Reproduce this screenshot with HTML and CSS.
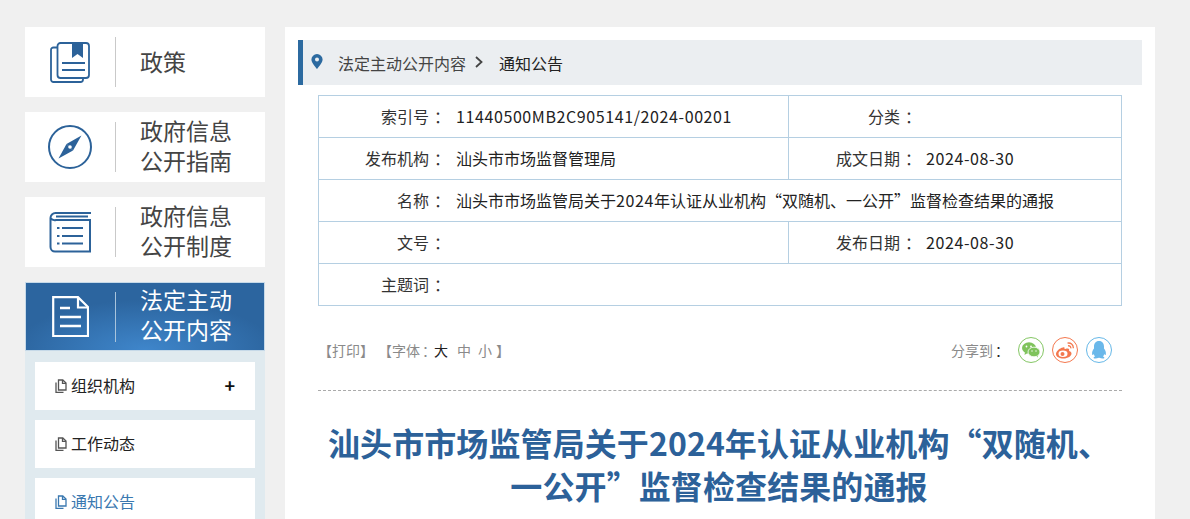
FILE: index.html
```html
<!DOCTYPE html>
<html lang="zh-CN">
<head>
<meta charset="utf-8">
<title>通知公告</title>
<link rel="stylesheet" href="styles.css">
</head>
<body>
<div class="page">
  <aside class="side">
    <a class="nav-card">
      <span class="nav-icon"><svg width="40" height="41" viewBox="0 0 40 41" fill="none" stroke="#2c6299" stroke-width="1.800"><path d="M7 5.500H3.500a2.500 2.500 0 0 0-2.500 2.500V37.500a2.500 2.500 0 0 0 2.500 2.500H30.500a2.500 2.500 0 0 0 2.500-2.500V36"/><rect x="7.500" y="1" width="31.500" height="35" rx="3"/><path d="M22 0h11v16l-5.500-4-5.500 4z" fill="#2c6299" stroke="none"/><path d="M12 21H35M12 28H35"/></svg></span>
      <span class="nav-text nav-single">政策</span>
    </a>
    <a class="nav-card">
      <span class="nav-icon"><svg width="46" height="46" viewBox="0 0 46 46" fill="none"><circle cx="23" cy="23" r="21" stroke="#2c6299" stroke-width="2"/><path d="M34.500 11.500 26 26.500 19.500 20z" fill="#2c6299"/><path d="M11.500 34.500 19.500 20 26 26.500z" fill="#2c6299"/><circle cx="23" cy="23" r="1.800" fill="#fff"/></svg></span>
      <span class="nav-text">政府信息<br>公开指南</span>
    </a>
    <a class="nav-card">
      <span class="nav-icon"><svg width="42" height="42" viewBox="0 0 42 42" fill="none" stroke="#2c6299" stroke-width="2"><path d="M42 2H6.500A5 5 0 0 0 1.500 7V36A4.500 4.500 0 0 0 6 40.500H41V9H7A5.500 5.500 0 0 1 1.500 7"/><path d="M7 5.500H39"/><path d="M13 17H34M13 25H34M13 32.500H34"/><path d="M8 17h2.500M8 25h2.500M8 32.500h2.500"/></svg></span>
      <span class="nav-text">政府信息<br>公开制度</span>
    </a>
    <a class="nav-card nav-active">
      <span class="nav-icon"><svg width="37" height="41" viewBox="0 0 37 41" fill="none" stroke="#fff" stroke-width="2.200"><path d="M1.200 1.200H26L36 11V40H1.200z"/><path d="M26 1.200V11.500H36"/><path d="M8 12H18M8 21H29M8 30H29" stroke-width="2.400"/></svg></span>
      <span class="nav-text">法定主动<br>公开内容</span>
    </a>
    <ul class="sub">
      <li class="sub-item"><svg class="doc" viewBox="0 0 12 14" fill="none" stroke="currentColor" stroke-width="1.300"><path d="M3.500 1h4.300L11 4v7H3.500z"/><path d="M7.500 1v3.300H11"/><path d="M1 3.500V13.300H8.500"/></svg><span class="sub-text">组织机构</span><b class="plus">+</b></li>
      <li class="sub-item"><svg class="doc" viewBox="0 0 12 14" fill="none" stroke="currentColor" stroke-width="1.300"><path d="M3.500 1h4.300L11 4v7H3.500z"/><path d="M7.500 1v3.300H11"/><path d="M1 3.500V13.300H8.500"/></svg><span class="sub-text">工作动态</span></li>
      <li class="sub-item sub-current"><svg class="doc" viewBox="0 0 12 14" fill="none" stroke="currentColor" stroke-width="1.300"><path d="M3.500 1h4.300L11 4v7H3.500z"/><path d="M7.500 1v3.300H11"/><path d="M1 3.500V13.300H8.500"/></svg><span class="sub-text">通知公告</span></li>
    </ul>
  </aside>
  <main class="main">
    <div class="crumb">
      <svg class="pin" width="12" height="15" viewBox="0 0 12 15"><path fill-rule="evenodd" d="M6 0a5.600 5.600 0 0 1 5.600 5.600C11.600 9 6 15 6 15S.4 9 .4 5.600A5.600 5.600 0 0 1 6 0zm0 3.600a2 2 0 1 0 0 4 2 2 0 0 0 0-4z" fill="#2c6aa0"/></svg>
      <span class="crumb-parent">法定主动公开内容</span>
      <svg class="chev" width="8" height="12" viewBox="0 0 8 12" fill="none" stroke="#444" stroke-width="1.800"><path d="M1 1l5.500 5L1 11"/></svg>
      <span class="crumb-now">通知公告</span>
    </div>
    <div class="meta">
      <div class="row">
        <div class="cell cell-l"><span class="k">索引号<span class="c">：</span></span><span class="v num">11440500MB2C905141/2024-00201</span></div>
        <div class="cell cell-r"><span class="k2">分类<span class="c">：</span></span></div>
      </div>
      <div class="row">
        <div class="cell cell-l"><span class="k">发布机构<span class="c">：</span></span><span class="v">汕头市市场监督管理局</span></div>
        <div class="cell cell-r"><span class="k2">成文日期<span class="c">：</span></span><span class="v num">2024-08-30</span></div>
      </div>
      <div class="row">
        <div class="cell"><span class="k">名称<span class="c">：</span></span><span class="v">汕头市市场监管局关于<span class="num">2024</span>年认证从业机构“双随机、一公开”监督检查结果的通报</span></div>
      </div>
      <div class="row">
        <div class="cell cell-l"><span class="k">文号<span class="c">：</span></span></div>
        <div class="cell cell-r"><span class="k2">发布日期<span class="c">：</span></span><span class="v num">2024-08-30</span></div>
      </div>
      <div class="row">
        <div class="cell"><span class="k">主题词<span class="c">：</span></span></div>
      </div>
    </div>
    <div class="tools">
      <div class="tools-left"><span class="print">【打印】</span><span>【字体<span class="c-small">：</span></span><span class="dark">大</span><span class="sz">中</span><span class="sz sz-small">小</span><span class="close">】</span></div>
      <div class="share">
        <span class="share-label">分享到<span class="dark c-small">：</span></span>
        <span class="share-btn wx"><svg width="18" height="16" viewBox="0 0 18 16"><ellipse cx="7" cy="6" rx="7" ry="5.800" fill="#7fc35c"/><path d="M3 10l-.5 3 3-2z" fill="#7fc35c"/><ellipse cx="12" cy="10" rx="6" ry="4.800" fill="#7fc35c" stroke="#fff" stroke-width=".8"/><path d="M15 14l1 1.800-.2-2.500z" fill="#7fc35c"/><circle cx="4.500" cy="4.500" r=".9" fill="#fff"/><circle cx="9" cy="4.500" r=".9" fill="#fff"/><circle cx="10" cy="9" r=".7" fill="#fff"/><circle cx="14" cy="9" r=".7" fill="#fff"/></svg></span>
        <span class="share-btn wb"><svg width="20" height="17" viewBox="0 0 20 17" fill="none"><path d="M8 5.500C4.500 6 1 9.500 1 12c0 2.800 3.500 4.500 7.500 4.500 4.500 0 8-2.500 8-5 0-1.500-1.500-2.200-2.500-2.500.5-1.500.3-3-2.200-2.500C10 7 9.500 7.200 9.500 7c.3-1.500-.2-2-1.500-1.500z" fill="#f4784e"/><ellipse cx="8" cy="11.800" rx="4.500" ry="3.300" fill="#fff"/><circle cx="7.500" cy="12" r="2" fill="#f4784e"/><path d="M12.500 1.200c3-.8 6 1.500 5.800 5M13 3.800c1.500-.3 3 .8 2.800 2.500" stroke="#f4784e" stroke-width="1.300"/></svg></span>
        <span class="share-btn qq"><svg width="16" height="18" viewBox="0 0 16 18"><path d="M8 0c3.400 0 5 2.600 5 5.500v2c1.300 1.500 2.300 3.800 1.800 6-.3 1-1 .6-1.600-.5-.2 1-.7 1.900-1.300 2.500 1.200.4 1.800 1 1.300 1.700-.5.600-3 .6-5-.4-.2.100-.3.100-.4 0-2 1-4.500 1-5 .4-.5-.7.100-1.300 1.300-1.700C3.500 14.900 3 14 2.800 13c-.6 1.100-1.300 1.500-1.600.5-.5-2.200.5-4.500 1.800-6v-2C3 2.600 4.600 0 8 0z" fill="#6ab8ea"/></svg></span>
      </div>
    </div>
    <h1 class="title">汕头市市场监管局关于2024年认证从业机构“双随机、一公开”监督检查结果的通报</h1>
  </main>
</div>
</body>
</html>
```
FILE: styles.css
```css
* { box-sizing: border-box; }
html, body { margin: 0; padding: 0; height: 519px; overflow: hidden; }
body { background: #f0f0f0; font-family: "Noto Sans CJK SC", "Open Sans", sans-serif; color: #222; }
ul { list-style: none; margin: 0; padding: 0; }
.page { display: flex; align-items: flex-start; gap: 20px; padding: 27px 0 0 25px; width: 1155px; }
.side { width: 240px; flex: none; display: flex; flex-direction: column; }
.nav-card { height: 70px; background: #fff; display: flex; align-items: center; margin-bottom: 15px; color: #444; }
.nav-icon { width: 91px; height: 50px; border-right: 1px solid #c9c9c9; display: flex; align-items: center; justify-content: center; padding-right: 1px; flex: none; }
.nav-text { padding: 0 0 4px 24px; font-size: 23px; line-height: 30px; }
.nav-single { padding-bottom: 2px; }
.nav-active { background: radial-gradient(ellipse 130px 50px at 50% 100%, #3f86cb, #2c659f 100%); color: #fff; border: 1px solid #c6d9e8; margin-bottom: 0; height: 69px; }
.nav-active .nav-icon { border-right-color: #a9c4dc; width: 90px; padding-right: 0; }
.nav-active .nav-text { padding-bottom: 6px; }
.sub { background: #e0eaef; padding: 11px 10px 0; height: 200px; }
.sub-item { height: 48px; background: #fff; margin-bottom: 10px; display: flex; align-items: center; padding-left: 20px; font-size: 16px; color: #222; gap: 4px; position: relative; }
.sub-text { padding-bottom: 2px; }
.doc { width: 12px; height: 14px; color: #555; flex: none; }
.plus { position: absolute; right: 20px; top: 9px; font-size: 18px; line-height: 28px; color: #111; font-weight: 700; }
.sub-current { color: #3a78b0; }
.sub-current .doc { color: #3a78b0; }
.main { width: 870px; flex: none; height: 492px; background: #fff; padding: 13px 13px 0; }
.crumb { height: 45px; background: #ebeef1; border-left: 5px solid #2c6aa0; display: flex; align-items: center; padding-left: 8px; font-size: 16px; }
.pin { flex: none; margin-top: -3px; }
.crumb-parent { margin-left: 15px; color: #444; }
.chev { margin-left: 9px; margin-top: -2px; }
.crumb-now { margin-left: 16px; color: #222; }
.meta { margin: 10px 20px 0; border: 1px solid #b5cfe2; border-bottom: 0; }
.row { height: 42px; display: flex; border-bottom: 1px solid #b5cfe2; font-size: 16px; }
.cell { display: flex; align-items: center; flex: 1; padding-bottom: 1px; }
.cell-l { flex: none; width: 470px; border-right: 1px solid #b5cfe2; }
.cell-r { flex: 1; }
.k { width: 137px; padding-right: 11px; text-align: right; flex: none; color: #333; white-space: nowrap; }
.k2 { width: 137px; padding-right: 10px; text-align: right; flex: none; color: #333; white-space: nowrap; }
.c { margin-left: 5px; margin-right: -5px; }
.c-small { margin-left: 2px; margin-right: -2px; }
.v { color: #222; white-space: nowrap; }
.num { letter-spacing: .6px; }
.tools { margin: 0 20px; height: 85px; padding-top: 30px; display: flex; justify-content: space-between; border-bottom: 1px dashed #aaa; align-items: flex-start; }
.tools-left { font-size: 14px; color: #8a8a8a; line-height: 28px; }
.print { margin-right: 11px; }
.sz { margin-left: 9px; }
.sz-small { margin-left: 7px; }
.close { margin-left: 4px; }
.dark { color: #222; }
.share { display: flex; align-items: center; padding-right: 10px; height: 28px; flex: none; }
.share-label { font-size: 14px; color: #8a8a8a; margin-right: 3px; white-space: nowrap; flex: none; }
.share-btn { width: 26px; height: 26px; border-radius: 50%; border: 1px solid; display: flex; align-items: center; justify-content: center; margin-left: 8px; flex: none; }
.wx { border-color: #85c765; }
.wb { border-color: #f4784e; }
.qq { border-color: #66b8e8; }
.title { margin: 30px 20px 0 18px; font-size: 32px; line-height: 43px; font-weight: 700; color: #2c6199; text-align: center; letter-spacing: .1px; }
```
